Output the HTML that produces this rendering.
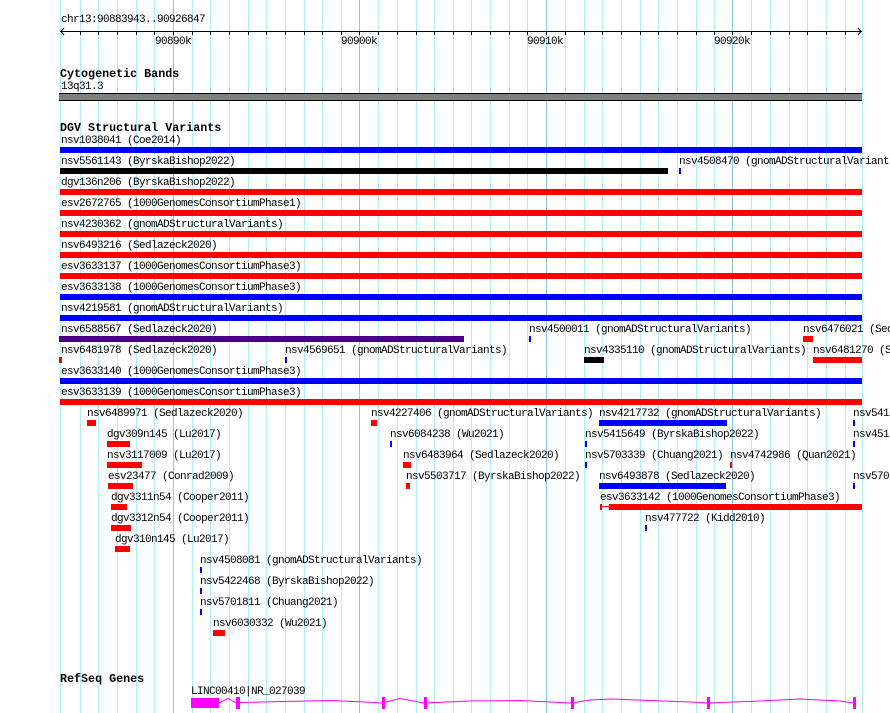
<!DOCTYPE html>
<html style="overflow:hidden"><head><meta charset="utf-8"><style>
html,body{margin:0;overflow:hidden;}
body{background:#fff;width:890px;height:713px;position:relative;font-family:"Liberation Mono",monospace;}
#w{position:absolute;left:0;top:0;width:890px;height:713px;overflow:hidden;}
.t{position:absolute;font-size:11px;line-height:11px;letter-spacing:-0.6px;white-space:pre;color:#000;}
.h{position:absolute;font-size:11.7px;line-height:12px;font-weight:bold;white-space:pre;color:#000;}
svg{position:absolute;left:0;top:0;}
</style></head><body><div id="w">
<svg width="890" height="713" shape-rendering="crispEdges">
<g stroke="#b2eef2" stroke-width="1">
<line x1="60.5" y1="0" x2="60.5" y2="713"/>
<line x1="80.5" y1="0" x2="80.5" y2="713"/><line x1="98.5" y1="0" x2="98.5" y2="713"/><line x1="117.5" y1="0" x2="117.5" y2="713"/><line x1="136.5" y1="0" x2="136.5" y2="713"/><line x1="154.5" y1="0" x2="154.5" y2="713"/>
<line x1="192.5" y1="0" x2="192.5" y2="713"/><line x1="210.5" y1="0" x2="210.5" y2="713"/><line x1="229.5" y1="0" x2="229.5" y2="713"/><line x1="248.5" y1="0" x2="248.5" y2="713"/><line x1="266.5" y1="0" x2="266.5" y2="713"/><line x1="285.5" y1="0" x2="285.5" y2="713"/><line x1="304.5" y1="0" x2="304.5" y2="713"/><line x1="322.5" y1="0" x2="322.5" y2="713"/><line x1="341.5" y1="0" x2="341.5" y2="713"/>
<line x1="378.5" y1="0" x2="378.5" y2="713"/><line x1="397.5" y1="0" x2="397.5" y2="713"/><line x1="416.5" y1="0" x2="416.5" y2="713"/><line x1="434.5" y1="0" x2="434.5" y2="713"/><line x1="453.5" y1="0" x2="453.5" y2="713"/><line x1="471.5" y1="0" x2="471.5" y2="713"/><line x1="490.5" y1="0" x2="490.5" y2="713"/><line x1="509.5" y1="0" x2="509.5" y2="713"/><line x1="527.5" y1="0" x2="527.5" y2="713"/>
<line x1="565.5" y1="0" x2="565.5" y2="713"/><line x1="584.5" y1="0" x2="584.5" y2="713"/><line x1="602.5" y1="0" x2="602.5" y2="713"/><line x1="621.5" y1="0" x2="621.5" y2="713"/><line x1="640.5" y1="0" x2="640.5" y2="713"/><line x1="658.5" y1="0" x2="658.5" y2="713"/><line x1="677.5" y1="0" x2="677.5" y2="713"/><line x1="696.5" y1="0" x2="696.5" y2="713"/><line x1="714.5" y1="0" x2="714.5" y2="713"/>
<line x1="751.5" y1="0" x2="751.5" y2="713"/><line x1="770.5" y1="0" x2="770.5" y2="713"/><line x1="789.5" y1="0" x2="789.5" y2="713"/><line x1="807.5" y1="0" x2="807.5" y2="713"/><line x1="826.5" y1="0" x2="826.5" y2="713"/><line x1="845.5" y1="0" x2="845.5" y2="713"/><line x1="862.5" y1="0" x2="862.5" y2="713"/>
</g>
<g stroke="#8cc8e8" stroke-width="1">
<line x1="173.5" y1="0" x2="173.5" y2="713"/><line x1="359.5" y1="0" x2="359.5" y2="713"/><line x1="546.5" y1="0" x2="546.5" y2="713"/><line x1="732.5" y1="0" x2="732.5" y2="713"/>
</g>
<g stroke="#000" stroke-width="1">
<line x1="60" y1="31.5" x2="862" y2="31.5"/>
<polyline points="64,28 61,31.5 64,35" fill="none" shape-rendering="auto"/>
<polyline points="858,28 861,31.5 858,35" fill="none" shape-rendering="auto"/>
<path d="M80.5 31v4M98.5 31v4M117.5 31v4M136.5 31v4M154.5 31v4M173.5 31v4M192.5 31v4M210.5 31v4M229.5 31v4M248.5 31v4M266.5 31v4M285.5 31v4M304.5 31v4M322.5 31v4M341.5 31v4M359.5 31v4M378.5 31v4M397.5 31v4M416.5 31v4M434.5 31v4M453.5 31v4M471.5 31v4M490.5 31v4M509.5 31v4M527.5 31v4M546.5 31v4M565.5 31v4M584.5 31v4M602.5 31v4M621.5 31v4M640.5 31v4M658.5 31v4M677.5 31v4M696.5 31v4M714.5 31v4M732.5 31v4M751.5 31v4M770.5 31v4M789.5 31v4M807.5 31v4M826.5 31v4M845.5 31v4"/>
</g>
<rect x="59" y="93" width="803" height="8" fill="#000"/>
<rect x="59" y="94" width="803" height="6" fill="#808080"/>
<g>
<rect x="60" y="147" width="802" height="6" fill="#0000ff"/>
<rect x="60" y="168" width="608" height="6" fill="#000"/>
<rect x="679" y="168" width="2" height="6" fill="#0000ff"/>
<rect x="60" y="189" width="802" height="6" fill="#ff0000"/>
<rect x="60" y="210" width="802" height="6" fill="#ff0000"/>
<rect x="60" y="231" width="802" height="6" fill="#ff0000"/>
<rect x="60" y="252" width="802" height="6" fill="#ff0000"/>
<rect x="60" y="273" width="802" height="6" fill="#ff0000"/>
<rect x="60" y="294" width="802" height="6" fill="#0000ff"/>
<rect x="60" y="315" width="802" height="6" fill="#0000ff"/>
<rect x="59" y="336" width="405" height="6" fill="#4b0082"/>
<rect x="529" y="336" width="2" height="6" fill="#0000ff"/>
<rect x="803" y="336" width="10" height="6" fill="#ff0000"/>
<rect x="59" y="357" width="3" height="6" fill="#ff0000"/>
<rect x="285" y="357" width="2" height="6" fill="#0000ff"/>
<rect x="584" y="357" width="20" height="6" fill="#000"/>
<rect x="813" y="357" width="49" height="6" fill="#ff0000"/>
<rect x="60" y="378" width="802" height="6" fill="#0000ff"/>
<rect x="60" y="399" width="802" height="6" fill="#ff0000"/>
<rect x="87" y="420" width="9" height="6" fill="#ff0000"/>
<rect x="371" y="420" width="6" height="6" fill="#ff0000"/>
<rect x="599" y="420" width="128" height="6" fill="#0000ff"/>
<rect x="853" y="420" width="2" height="6" fill="#0000ff"/>
<rect x="107" y="441" width="23" height="6" fill="#ff0000"/>
<rect x="390" y="441" width="2" height="6" fill="#0000ff"/>
<rect x="585" y="441" width="2" height="6" fill="#0000ff"/>
<rect x="853" y="441" width="2" height="6" fill="#0000ff"/>
<rect x="107" y="462" width="35" height="6" fill="#ff0000"/>
<rect x="403" y="462" width="8" height="6" fill="#ff0000"/>
<rect x="585" y="462" width="2" height="6" fill="#0000ff"/>
<rect x="730" y="462" width="2" height="6" fill="#ff0000"/>
<rect x="108" y="483" width="25" height="6" fill="#ff0000"/>
<rect x="406" y="483" width="4" height="6" fill="#ff0000"/>
<rect x="599" y="483" width="127" height="6" fill="#0000ff"/>
<rect x="853" y="483" width="2" height="6" fill="#0000ff"/>
<rect x="111" y="504" width="16" height="6" fill="#ff0000"/>
<rect x="600" y="504" width="2" height="6" fill="#ff0000"/>
<rect x="601" y="506" width="8" height="1" fill="#ff0000"/>
<rect x="609" y="504" width="253" height="6" fill="#ff0000"/>
<rect x="111" y="525" width="20" height="6" fill="#ff0000"/>
<rect x="645" y="525" width="2" height="6" fill="#0000ff"/>
<rect x="115" y="546" width="15" height="6" fill="#ff0000"/>
<rect x="200" y="567" width="2" height="6" fill="#0000ff"/>
<rect x="200" y="588" width="2" height="6" fill="#0000ff"/>
<rect x="200" y="609" width="2" height="6" fill="#0000ff"/>
<rect x="213" y="630" width="12" height="6" fill="#ff0000"/>
</g>
<g fill="#ff00ff">
<rect x="191" y="698" width="28" height="10"/>
<rect x="236" y="697" width="4" height="12"/>
<rect x="382" y="697" width="3" height="12"/>
<rect x="424" y="697" width="3" height="12"/>
<rect x="571" y="697" width="3" height="12"/>
<rect x="707" y="697" width="3" height="12"/>
<rect x="853" y="697" width="3" height="12"/>
</g>
<polyline fill="none" stroke="#ff00ff" stroke-width="1" shape-rendering="auto" points="219,703 228,698.5 236,703 240,702.5 283,701.5 330,700.5 365,702 382,703 400,698.5 424,703 470,701 520,700.5 571,703 590,700 611,699 650,700.5 690,702 707,703 760,701 800,699 840,701 853,703"/>
</svg>

<div class="t" style="left:61px;top:15px">chr13:90883943..90926847</div>
<div class="t" style="left:155px;top:37px">90890k</div>
<div class="t" style="left:341px;top:37px">90900k</div>
<div class="t" style="left:527px;top:37px">90910k</div>
<div class="t" style="left:714px;top:37px">90920k</div>

<div class="h" style="left:60px;top:68px">Cytogenetic Bands</div>
<div class="t" style="left:61px;top:82px">13q31.3</div>
<div class="h" style="left:60px;top:122px">DGV Structural Variants</div>

<div class="t" style="left:61px;top:136px">nsv1038041 (Coe2014)</div>
<div class="t" style="left:61px;top:157px">nsv5561143 (ByrskaBishop2022)</div>
<div class="t" style="left:679px;top:157px">nsv4508470 (gnomADStructuralVariants)</div>
<div class="t" style="left:61px;top:178px">dgv136n206 (ByrskaBishop2022)</div>
<div class="t" style="left:61px;top:199px">esv2672765 (1000GenomesConsortiumPhase1)</div>
<div class="t" style="left:61px;top:220px">nsv4230362 (gnomADStructuralVariants)</div>
<div class="t" style="left:61px;top:241px">nsv6493216 (Sedlazeck2020)</div>
<div class="t" style="left:61px;top:262px">esv3633137 (1000GenomesConsortiumPhase3)</div>
<div class="t" style="left:61px;top:283px">esv3633138 (1000GenomesConsortiumPhase3)</div>
<div class="t" style="left:61px;top:304px">nsv4219581 (gnomADStructuralVariants)</div>
<div class="t" style="left:61px;top:325px">nsv6588567 (Sedlazeck2020)</div>
<div class="t" style="left:529px;top:325px">nsv4500011 (gnomADStructuralVariants)</div>
<div class="t" style="left:803px;top:325px">nsv6476021 (Sedlazeck2020)</div>
<div class="t" style="left:61px;top:346px">nsv6481978 (Sedlazeck2020)</div>
<div class="t" style="left:285px;top:346px">nsv4569651 (gnomADStructuralVariants)</div>
<div class="t" style="left:584px;top:346px">nsv4335110 (gnomADStructuralVariants)</div>
<div class="t" style="left:813px;top:346px">nsv6481270 (Sedlazeck2020)</div>
<div class="t" style="left:61px;top:367px">esv3633140 (1000GenomesConsortiumPhase3)</div>
<div class="t" style="left:61px;top:388px">esv3633139 (1000GenomesConsortiumPhase3)</div>
<div class="t" style="left:87px;top:409px">nsv6489971 (Sedlazeck2020)</div>
<div class="t" style="left:371px;top:409px">nsv4227406 (gnomADStructuralVariants)</div>
<div class="t" style="left:599px;top:409px">nsv4217732 (gnomADStructuralVariants)</div>
<div class="t" style="left:853px;top:409px">nsv5415</div>
<div class="t" style="left:107px;top:430px">dgv309n145 (Lu2017)</div>
<div class="t" style="left:390px;top:430px">nsv6084238 (Wu2021)</div>
<div class="t" style="left:585px;top:430px">nsv5415649 (ByrskaBishop2022)</div>
<div class="t" style="left:853px;top:430px">nsv451</div>
<div class="t" style="left:107px;top:451px">nsv3117009 (Lu2017)</div>
<div class="t" style="left:403px;top:451px">nsv6483964 (Sedlazeck2020)</div>
<div class="t" style="left:585px;top:451px">nsv5703339 (Chuang2021)</div>
<div class="t" style="left:730px;top:451px">nsv4742986 (Quan2021)</div>
<div class="t" style="left:108px;top:472px">esv23477 (Conrad2009)</div>
<div class="t" style="left:406px;top:472px">nsv5503717 (ByrskaBishop2022)</div>
<div class="t" style="left:599px;top:472px">nsv6493878 (Sedlazeck2020)</div>
<div class="t" style="left:853px;top:472px">nsv5705</div>
<div class="t" style="left:111px;top:493px">dgv3311n54 (Cooper2011)</div>
<div class="t" style="left:600px;top:493px">esv3633142 (1000GenomesConsortiumPhase3)</div>
<div class="t" style="left:111px;top:514px">dgv3312n54 (Cooper2011)</div>
<div class="t" style="left:645px;top:514px">nsv477722 (Kidd2010)</div>
<div class="t" style="left:115px;top:535px">dgv310n145 (Lu2017)</div>
<div class="t" style="left:200px;top:556px">nsv4508081 (gnomADStructuralVariants)</div>
<div class="t" style="left:200px;top:577px">nsv5422468 (ByrskaBishop2022)</div>
<div class="t" style="left:200px;top:598px">nsv5701811 (Chuang2021)</div>
<div class="t" style="left:213px;top:619px">nsv6030332 (Wu2021)</div>

<div class="h" style="left:60px;top:673px">RefSeq Genes</div>
<div class="t" style="left:191px;top:687px">LINC00410|NR_027039</div>
</div></body></html>
